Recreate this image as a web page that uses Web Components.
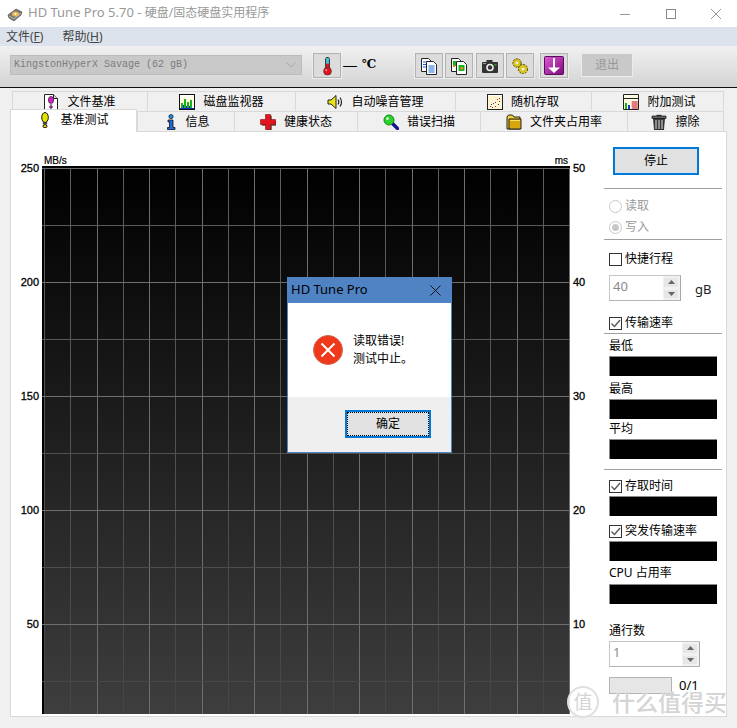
<!DOCTYPE html>
<html lang="zh">
<head>
<meta charset="utf-8">
<title>HD Tune Pro</title>
<style>
html, body { margin: 0; padding: 0; background: #f0f0f0; }
body { font: 12px/18px "Noto Sans", "Noto Sans CJK SC", sans-serif; color: #000; overflow: hidden; }
</style>
</head>
<body>
<hd-app></hd-app>
<script>
const Icons = {
    logo: `<path d="M1 9 9 3l6 3-1 3-7 6-5-3z" fill="#777" stroke="#444" stroke-width=".6"/><ellipse cx="8.5" cy="8" rx="3.6" ry="2.6" fill="#e9b24c"/><circle cx="8.5" cy="8" r="1" fill="#fff"/><path d="M2 10l5 3 7-6" fill="none" stroke="#bbb"/>`,
    fileBench: `<path d="M1.5.5h9l4 4v11h-13z" fill="#fff" stroke="#222"/><path d="M10.5.5v4h4" fill="#ddd" stroke="#222"/><ellipse cx="8" cy="6" rx="2.6" ry="3.6" fill="#d81ecb" stroke="#222" stroke-width=".7"/><rect x="6.8" y="9.6" width="2.4" height="1.4" fill="#999"/><circle cx="8" cy="13" r="1.4" fill="#d81ecb" stroke="#222" stroke-width=".6"/>`,
    monitor: `<rect x=".5" y=".5" width="15" height="15" fill="#fffbe0" stroke="#111"/><rect x="1" y="1" width="14" height="2" fill="#fff"/><path d="M2 14V9h2v5zm3 0V5h2v9zm3 0V8h2v6zm3 0V6h2v8z" fill="#18b31c"/><path d="M1 14h14v1H1z" fill="#0a30c8"/><path d="M4 14v-3h1v3zm3 0v-2h1v2zm3 0v-2h1v2z" fill="#0a30c8"/>`,
    speaker: `<path d="M1 6h3l5-4.5v13L4 10H1z" fill="#eee21a" stroke="#222"/><path d="M11 5.5c1 1.5 1 3.5 0 5M13 3.5c2 2.5 2 6.500 0 9" fill="none" stroke="#222" stroke-width="1.200"/>`,
    random: `<rect x=".5" y=".5" width="15" height="15" fill="#fdf5cf" stroke="#222"/><path d="M1 1h14v1H1z" fill="#fff"/><g fill="#d01c1c"><rect x="3" y="12" width="1" height="1"/><rect x="6" y="9" width="1" height="1"/><rect x="10" y="5" width="1" height="1"/><rect x="12" y="7" width="1" height="1"/><rect x="8" y="12" width="1" height="1"/></g><g fill="#2432c8"><rect x="4" y="10" width="1" height="1"/><rect x="8" y="8" width="1" height="1"/><rect x="12" y="4" width="1" height="1"/><rect x="11" y="10" width="1" height="1"/><rect x="5" y="13" width="1" height="1"/></g>`,
    extra: `<path d="M.5.5h15v15H.5z" fill="#fffbe0" stroke="#222"/><rect x="1" y="4" width="14" height="1" fill="#222"/><path d="M2 15V9h2v6z" fill="#18b31c"/><path d="M5 15v-4h2v4z" fill="#1438d8"/><rect x="8" y="6.500" width="7" height="8.500" fill="#fff"/><path d="M8.500 8h6m-6 2h6m-6 2h6m-6 2h6M10 7v8m2-8v8m2-8v8" stroke="#d01c1c" stroke-width=".7" fill="none"/>`,
    bulb: `<ellipse cx="5" cy="5.500" rx="3.300" ry="5" fill="#e5e000" stroke="#111"/><path d="M3.200 10.500h3.600V12H3.200z" fill="#777" stroke="#111" stroke-width=".6"/><ellipse cx="5" cy="14.200" rx="2" ry="1.600" fill="#e5e000" stroke="#111"/>`,
    info: `<circle cx="6" cy="2.600" r="2.100" fill="#1e8ae6" stroke="#111" stroke-width=".7"/><path d="M3 6h5v7.500h2v2H2.500v-2h2V8H3z" fill="#1a6bd8" stroke="#111" stroke-width=".8"/>`,
    cross: `<path d="M6 1h5v5h5v5h-5v5H6v-5H1V6h5z" fill="#555" transform="translate(.8 .8)"/><path d="M5.500.5h5v5h5v5h-5v5h-5v-5h-5v-5h5z" fill="#e2141c" stroke="#8c0a0e" stroke-width=".6"/>`,
    magnifier: `<path d="M9.500 9.500l5 5" stroke="#14148c" stroke-width="3.400" stroke-linecap="round"/><circle cx="6" cy="6" r="5" fill="#2ed02e" stroke="#118a1a"/><circle cx="4.500" cy="4.500" r="1.500" fill="#c4f7c4"/>`,
    folder: `<path d="M1 3l1.500-2h4L8 3h6v12H1z" fill="#f2d23a" stroke="#222"/><path d="M3 5h12v10H3z" fill="#d8a70e" stroke="#222"/><path d="M4 6h10v1H4z" fill="#f7e05c"/>`,
    trash: `<path d="M5.500 1.500h5" stroke="#333" stroke-width="1.400"/><path d="M1 2h14v2.500H1z" fill="#666" stroke="#111" stroke-width=".7"/><path d="M2.500 4.500h11l-1 11.500h-9z" fill="#3c3c3c" stroke="#111" stroke-width=".7"/><path d="M5 6v9M8 6v9M11 6v9" stroke="#cfcfcf" stroke-width="1.100"/>`,
    thermo: `<rect x="5.500" y="1" width="5" height="14" rx="2.500" fill="#222"/><rect x="6.500" y="2" width="3" height="7" fill="#3fc9d8"/><rect x="6.500" y="8" width="3" height="8" fill="#e2141c"/><circle cx="8" cy="16" r="4.200" fill="#e2141c" stroke="#333" stroke-width=".6"/><circle cx="6.600" cy="15" r="1" fill="#f7a0a0"/>`,
    docs: `<path d="M1.500 1.500h7l3 3v10h-10z" fill="#fff" stroke="#222"/><path d="M6.500 4.500h7l3 3v10h-10z" fill="#fff" stroke="#222"/><path d="M3 5h4M3 7.500h3M3 10h3M8.500 9h6M8.500 11h6M8.500 13h6M8.500 15h6" stroke="#1a6bd8" fill="none"/>`,
    docsImage: `<path d="M1.500 1.500h7l3 3v10h-10z" fill="#fff" stroke="#222"/><path d="M6.500 4.500h7l3 3v10h-10z" fill="#fff" stroke="#222"/><rect x="3" y="4" width="3" height="5" fill="#18b31c"/><rect x="3" y="8" width="2" height="2" fill="#e58a1a"/><rect x="8.500" y="8" width="6" height="6" fill="#18b31c"/><rect x="10.500" y="10" width="2.500" height="2.500" fill="#e58a1a"/>`,
    camera: `<path d="M5.500 3h6v2h4.500a1 1 0 0 1 1 1v9a1 1 0 0 1-1 1H2a1 1 0 0 1-1-1V6a1 1 0 0 1 1-1h3.500z" fill="#333"/><rect x="2" y="6" width="3" height="1" fill="#999"/><circle cx="9" cy="10.500" r="3.800" fill="#eee"/><circle cx="9" cy="10.500" r="2.200" fill="#333"/><rect x="13.500" y="7" width="2" height="1.500" fill="#18b31c"/>`,
    gears: `<circle cx="6" cy="6" r="4.200" fill="#d9c21a" stroke="#57500a" stroke-dasharray="2 1"/><circle cx="6" cy="6" r="1.400" fill="#eee"/><circle cx="12" cy="12" r="4.600" fill="#d9c21a" stroke="#57500a" stroke-dasharray="2 1"/><circle cx="12" cy="12" r="1.600" fill="#eee"/>`,
    save: `<defs><linearGradient id="sv" x1="0" y1="0" x2="1" y2="1"><stop offset="0" stop-color="#e05ad8"/><stop offset="1" stop-color="#7c0a78"/></linearGradient></defs><rect x=".5" y=".5" width="19" height="18" rx="1" fill="url(#sv)" stroke="#5a0a58"/><path d="M9 2h2v9.500h5L10 17 4 11.500h5z" fill="#fff"/>`,
    error: `<circle cx="15" cy="15" r="14.500" fill="#f0391a" stroke="#c9694f"/><path d="M8.500 8.500l13 13m0-13l-13 13" stroke="#fff" stroke-width="2"/>`
};

class HdIcon extends HTMLElement {
    connectedCallback() {
        if (this.shadowRoot) return;
        const w = this.getAttribute("w") || 16, h = this.getAttribute("h") || w;
        const box = this.getAttribute("box") || `0 0 ${w} ${h}`;
        this.attachShadow({mode: "open"}).innerHTML = `
        <style>:host { display: block; flex: none; width: ${w}px; height: ${h}px; } svg { display: block; }</style>
        <svg width="${w}" height="${h}" viewBox="${box}">${Icons[this.getAttribute("name")]}</svg>`;
    }
}

class HdTitlebar extends HTMLElement {
    connectedCallback() {
        this.attachShadow({mode: "open"}).innerHTML = `
        <style>
            :host { display: flex; align-items: center; height: 27px; background: #fff; color: #999; font-size: 13px; line-height: 25px; }
            hd-icon { margin: 0 5px 0 7px; }
            .name { flex: 1; padding-bottom: 2px; }
            .cn { font-size: 12px; }
            .ctl { width: 45.5px; height: 27px; display: flex; align-items: center; justify-content: center; }
            .ctl:last-child { margin-right: -2px; }
            .ctl svg { display: block; }
        </style>
        <hd-icon name="logo" w="16"></hd-icon>
        <span class="name">HD Tune Pro 5.70 - <span class="cn">硬盘/固态硬盘实用程序</span></span>
        <span class="ctl"><svg width="10" height="10"><path d="M0 5.500h10" stroke="#999"/></svg></span>
        <span class="ctl"><svg width="10" height="10"><rect x=".5" y=".5" width="9" height="9" fill="none" stroke="#888"/></svg></span>
        <span class="ctl"><svg width="10" height="10"><path d="M0 0l10 10M10 0L0 10" stroke="#999"/></svg></span>`;
    }
}

class HdMenubar extends HTMLElement {
    connectedCallback() {
        this.attachShadow({mode: "open"}).innerHTML = `
        <style>
            :host { display: flex; gap: 19px; height: 19px; padding-left: 6px; background: #dce3ec; color: #444; font-size: 12px; line-height: 19px; }
            u { text-underline-offset: 1px; }
        </style>
        <span>文件(<u>F</u>)</span>
        <span>帮助(<u>H</u>)</span>`;
    }
}

class HdToolButton extends HTMLElement {
    connectedCallback() {
        this.attachShadow({mode: "open"}).innerHTML = `
        <style>
            :host { display: flex; flex: none; align-items: center; justify-content: center; box-sizing: border-box; width: 28px; height: 25px; background: #dcdcdc; border: 1px solid #b2b2b2; box-shadow: 0 0 0 1px #eeeeee; }
        </style>
        <slot></slot>`;
    }
}

class HdToolbar extends HTMLElement {
    connectedCallback() {
        this.attachShadow({mode: "open"}).innerHTML = `
        <style>
            :host { display: flex; align-items: flex-start; box-sizing: border-box; height: 42px; padding: 7px 0 0 10px; background: linear-gradient(#f1f1f1, #d3d3d3); border-bottom: 1px solid #111; }
            .drive { display: flex; align-items: center; justify-content: space-between; box-sizing: border-box; width: 292px; height: 20px; margin-top: 2px; padding: 0 5px 0 3px; background: #c8c8c8; border: 1px solid #bcbcbc; font: 10px/18px "Liberation Mono", monospace; color: #7c7c7c; }
            .temp { margin-left: 11px; }
            .dash { width: 16px; margin-left: 1px; font-size: 15px; font-weight: 300; line-height: 22px; text-align: center; }
            .unit { width: 16px; margin-left: 4px; font: bold 12px/22px "DejaVu Serif", serif; }
            .b1 { margin-left: 37px; } .b2 { margin-left: 2px; } .b3 { margin-left: 3px; } .b4 { margin-left: 2px; } .b5 { margin-left: 6px; }
            .exit { flex: none; box-sizing: border-box; width: 52px; height: 24px; margin-left: 13px; background: #c9c9c9; border: 1px solid #ececec; color: #999; font-size: 12px; line-height: 22px; text-align: center; }
        </style>
        <div class="drive"><span>KingstonHyperX Savage (62 gB)</span>
            <svg width="10" height="6"><path d="M.5.5l4.500 4.500L9.500.5" fill="none" stroke="#a8a8a8"/></svg></div>
        <hd-tool-button class="temp"><hd-icon name="thermo" w="15" h="20" box="0 0 16 21"></hd-icon></hd-tool-button>
        <span class="dash">—</span>
        <span class="unit">℃</span>
        <hd-tool-button class="b1"><hd-icon name="docs" w="18"></hd-icon></hd-tool-button>
        <hd-tool-button class="b2"><hd-icon name="docsImage" w="18"></hd-icon></hd-tool-button>
        <hd-tool-button class="b3"><hd-icon name="camera" w="18"></hd-icon></hd-tool-button>
        <hd-tool-button class="b4"><hd-icon name="gears" w="18"></hd-icon></hd-tool-button>
        <hd-tool-button class="b5"><hd-icon name="save" w="20" h="19"></hd-icon></hd-tool-button>
        <div class="exit">退出</div>`;
    }
}

class HdTab extends HTMLElement {
    connectedCallback() {
        const icon = this.getAttribute("icon");
        const iw = this.getAttribute("iw") || 16, ih = this.getAttribute("ih") || 16;
        this.attachShadow({mode: "open"}).innerHTML = `
        <style>
            :host { display: flex; flex: none; align-items: center; justify-content: center; gap: 8px; box-sizing: border-box; height: 20px; background: #f0f0f0; border: solid #d9d9d9; border-width: 1px 0 0 1px; font-size: 12px; line-height: 18px; color: #000; }
            :host([last]) { border-right-width: 1px; }
            :host([selected]) { position: relative; z-index: 1; height: 23px; margin-bottom: -1px; padding: 0 0 3px 2px; gap: 10px; background: #fff; border-width: 1px 1px 0 1px; }
        </style>
        <hd-icon name="${icon}" w="${iw}" h="${ih}" box="0 0 ${iw} ${ih}"></hd-icon>
        <slot></slot>`;
    }
}

class HdTabs extends HTMLElement {
    connectedCallback() {
        this.attachShadow({mode: "open"}).innerHTML = `
        <style>
            :host { display: block; padding-top: 3px; }
            .row { display: flex; align-items: flex-end; }
            .back { height: 18px; padding-left: 12px; align-items: flex-start; }
            .front { height: 22px; padding-left: 10px; }
        </style>
        <div class="row back">
            <hd-tab icon="fileBench" style="width:135px;padding-right:1px">文件基准</hd-tab>
            <hd-tab icon="monitor" style="width:148px">磁盘监视器</hd-tab>
            <hd-tab icon="speaker" style="width:160px">自动噪音管理</hd-tab>
            <hd-tab icon="random" style="width:136px;padding-right:1px">随机存取</hd-tab>
            <hd-tab icon="extra" style="width:133px;padding-left:4px" last>附加测试</hd-tab>
        </div>
        <div class="row front">
            <hd-tab icon="bulb" iw="10" style="width:127px" selected>基准测试</hd-tab>
            <hd-tab icon="info" iw="12" style="width:97px;padding-left:3px">信息</hd-tab>
            <hd-tab icon="cross" style="width:123px">健康状态</hd-tab>
            <hd-tab icon="magnifier" style="width:123px">错误扫描</hd-tab>
            <hd-tab icon="folder" style="width:147px">文件夹占用率</hd-tab>
            <hd-tab icon="trash" style="width:97px" last>擦除</hd-tab>
        </div>`;
    }
}

class HdChart extends HTMLElement {
    connectedCallback() {
        // 网格线: 竖线 20 格, 横线每 57px 一条, 偶数条是主线
        let lines = "";
        for (let i = 0; i <= 20; i++) {
            const x = Math.round(2 + 26.25 * i) + .5;
            const major = i % 2 == 0 && i > 0;
            lines += `<path d="M${x} 2V548" stroke="${major ? "#6e6e6e" : "url(#minor)"}"/>`;
        }
        for (let i = 0; i < 10; i++) {
            const y = 2 + 57 * i + .5;
            lines += `<path d="M0 ${y}H527" stroke="${i % 2 == 0 ? "#6e6e6e" : "url(#minor)"}"/>`;
        }
        const left = [250, 200, 150, 100, 50].map(n => `<span>${n}</span>`).join("");
        const right = [50, 40, 30, 20, 10].map(n => `<span>${n}</span>`).join("");
        this.attachShadow({mode: "open"}).innerHTML = `
        <style>
            :host { display: flex; flex: none; font: 11px/14px "Liberation Sans", sans-serif; color: #000; }
            .axis { display: flex; flex-direction: column; flex: none; padding-top: 29px; -webkit-text-stroke: .3px #000; }
            .axis span { flex: none; height: 114px; }
            .axis span:last-child { height: 14px; }
            .left { width: 28px; padding-right: 3px; text-align: right; }
            .right { width: 31px; padding-left: 3px; }
            .plot { padding-top: 23px; }
            .unit { display: flex; justify-content: space-between; height: 11px; padding: 0 2px; font-size: 10px; line-height: 11px; -webkit-text-stroke: .2px #000; }
            svg { display: block; }
        </style>
        <div class="axis left">${left}</div>
        <div class="plot">
            <div class="unit"><span>MB/s</span><span>ms</span></div>
            <svg width="528" height="548">
                <defs>
                    <linearGradient id="bg" x1="0" y1="0" x2="0" y2="1"><stop offset="0" stop-color="#000"/><stop offset="1" stop-color="#3e3e3e"/></linearGradient>
                    <linearGradient id="minor" gradientUnits="userSpaceOnUse" x1="0" y1="0" x2="0" y2="548"><stop offset="0" stop-color="#5e5e5e"/><stop offset="1" stop-color="#464646"/></linearGradient>
                </defs>
                <rect x="2" y="2" width="525" height="546" fill="url(#bg)"/>
                <rect width="528" height="2" fill="#000"/>
                <rect width="2" height="548" fill="#000"/>
                ${lines}
            </svg>
        </div>
        <div class="axis right">${right}</div>`;
    }
}

class HdCheck extends HTMLElement {
    connectedCallback() {
        const on = this.hasAttribute("checked");
        this.attachShadow({mode: "open"}).innerHTML = `
        <style>
            :host { display: flex; align-items: center; gap: 3px; box-sizing: border-box; height: 20px; padding: 2px 0 0 5px; font-size: 12px; line-height: 18px; }
            .box { box-sizing: border-box; width: 13px; height: 13px; border: 1px solid #333; background: #fff; }
            svg { display: block; }
        </style>
        <div class="box">${on ? `<svg width="11" height="11"><path d="M1.500 5.500l3 3 5.500-6.500" fill="none" stroke="#555" stroke-width="1.300"/></svg>` : ""}</div>
        <slot></slot>`;
    }
}

class HdRadio extends HTMLElement {
    connectedCallback() {
        const on = this.hasAttribute("checked");
        this.attachShadow({mode: "open"}).innerHTML = `
        <style>
            :host { display: flex; align-items: center; gap: 3px; height: 20px; padding-left: 5px; color: #9a9a9a; font-size: 12px; line-height: 18px; }
            svg { display: block; }
        </style>
        <svg width="13" height="13"><circle cx="6.500" cy="6.500" r="6" fill="#fff" stroke="#c8c8c8"/>${on ? `<circle cx="6.500" cy="6.500" r="3.500" fill="#c8c8c8"/>` : ""}</svg>
        <slot></slot>`;
    }
}

class HdSpin extends HTMLElement {
    connectedCallback() {
        this.attachShadow({mode: "open"}).innerHTML = `
        <style>
            :host { display: flex; box-sizing: border-box; height: 26px; background: #fff; border: 1px solid #c6c6c6; border-right-color: #a8a8a8; border-bottom-color: #b4b4b4; color: #8a8a8a; font-size: 13px; line-height: 20px; }
            .value { flex: 1; padding-left: 3px; }
            .btns { display: flex; flex-direction: column; gap: 1px; width: 17px; padding: 1px 1px 1px 0; background: #f0f0f0; box-sizing: border-box; }
            .btn { flex: 1; display: flex; align-items: center; justify-content: center; background: #e6e6e6; border: 1px solid #f2f2f2; box-sizing: border-box; }
            svg { display: block; }
        </style>
        <div class="value"><slot></slot></div>
        <div class="btns">
            <div class="btn"><svg width="7" height="4"><path d="M3.500 0L7 4H0z" fill="#666"/></svg></div>
            <div class="btn"><svg width="7" height="4"><path d="M0 0h7L3.500 4z" fill="#666"/></svg></div>
        </div>`;
    }
}

class HdReadout extends HTMLElement {
    connectedCallback() {
        this.attachShadow({mode: "open"}).innerHTML = `
        <style>
            :host { display: block; box-sizing: border-box; width: 108px; height: 20px; margin-left: 5px; background: #000; border: solid #888; border-width: 1px 0 0 1px; }
        </style>`;
    }
}

class HdSidebar extends HTMLElement {
    connectedCallback() {
        this.attachShadow({mode: "open"}).innerHTML = `
        <style>
            :host { display: block; flex: none; width: 118px; padding-top: 15px; font-size: 12px; line-height: 18px; }
            .stop { box-sizing: border-box; width: 86px; height: 28px; margin-left: 9px; background: #e1e1e1; border: 2px solid #0078d7; line-height: 24px; text-align: center; }
            hr { height: 1px; margin: 0; border: 0; background: #a0a0a0; }
            .label { height: 18px; padding-left: 5px; }
            .unit { font-size: 13px; margin: 5px 0 0 14px; color: #222; }
            .row { display: flex; margin-left: 5px; }
            .bar { box-sizing: border-box; width: 63px; height: 17px; margin-left: 5px; background: #e6e6e6; border: 1px solid #b4b4b4; }
            .pass { height: 14px; margin: 1px 0 0 7px; font-size: 13px; line-height: 14px; }
        </style>
        <div class="stop">停止</div>
        <hr style="margin-top:13px">
        <hd-radio style="margin-top:7px">读取</hd-radio>
        <hd-radio style="margin-top:1px" checked>写入</hd-radio>
        <hr style="margin-top:2px">
        <hd-check style="margin-top:8px">快捷行程</hd-check>
        <div class="row" style="margin-top:7px"><hd-spin style="width:72px">40</hd-spin><span class="unit">gB</span></div>
        <hd-check style="margin-top:11px" checked>传输速率</hd-check>
        <hr style="margin-top:1px">
        <div class="label" style="margin-top:3px">最低</div>
        <hd-readout style="margin-top:1px"></hd-readout>
        <div class="label" style="margin-top:4px">最高</div>
        <hd-readout style="margin-top:1px"></hd-readout>
        <div class="label" style="margin-top:1px">平均</div>
        <hd-readout style="margin-top:1px"></hd-readout>
        <hr style="margin-top:10px">
        <hd-check style="margin-top:5px" checked>存取时间</hd-check>
        <hd-readout style="margin-top:1px"></hd-readout>
        <hd-check style="margin-top:4px" checked>突发传输速率</hd-check>
        <hd-readout style="margin-top:1px"></hd-readout>
        <div class="label" style="margin-top:3px">CPU 占用率</div>
        <hd-readout style="margin-top:2px"></hd-readout>
        <div class="label" style="margin-top:18px">通行数</div>
        <div class="row" style="margin-top:1px"><hd-spin style="width:91px">1</hd-spin></div>
        <div style="display:flex;margin-top:10px"><div class="bar"></div><span class="pass">0/1</span></div>`;
    }
}

class HdDialog extends HTMLElement {
    connectedCallback() {
        this.attachShadow({mode: "open"}).innerHTML = `
        <style>
            :host { position: absolute; left: 287px; top: 277px; z-index: 5; display: flex; flex-direction: column; box-sizing: border-box; width: 165px; height: 176px; background: #fff; border: 1px solid #4f83c4; font-size: 12px; line-height: 18px; }
            .title { display: flex; align-items: center; justify-content: space-between; height: 25px; padding: 0 10px 0 3px; background: #4f83c4; font-size: 13px; line-height: 23px; color: #000; }
            .title span { padding-bottom: 2px; }
            .body { display: flex; align-items: center; gap: 10px; flex: 1; padding: 0 0 0 25px; }
            .foot { display: flex; justify-content: flex-end; height: 55px; padding: 13px 20px 0 0; box-sizing: border-box; background: #efefef; }
            .ok { box-sizing: border-box; width: 86px; height: 28px; background: #e1e1e1; border: 2px solid #0078d7; outline: 1px dotted #000; outline-offset: -3px; line-height: 24px; text-align: center; }
            svg { display: block; }
        </style>
        <div class="title"><span>HD Tune Pro</span><svg width="11" height="11"><path d="M.5.5l10 10m0-10l-10 10" stroke="#111"/></svg></div>
        <div class="body"><hd-icon name="error" w="30"></hd-icon><div>读取错误!<br>测试中止。</div></div>
        <div class="foot"><div class="ok">确定</div></div>`;
    }
}

class HdWatermark extends HTMLElement {
    connectedCallback() {
        this.attachShadow({mode: "open"}).innerHTML = `
        <style>
            :host { position: absolute; left: 567px; top: 686px; z-index: 6; display: flex; align-items: center; gap: 13px; color: #d4d4d4; }
            .logo { display: flex; align-items: center; justify-content: center; box-sizing: border-box; width: 32px; height: 32px; border-radius: 50%; background: rgba(255,255,255,.85); border: 2px solid #dedede; font-size: 19px; line-height: 28px; }
            .name { font-size: 23px; line-height: 20px; font-weight: 500; text-shadow: 0 0 2px #fff; }
        </style>
        <div class="logo">值</div>
        <div class="name">什么值得买</div>`;
    }
}

class HdApp extends HTMLElement {
    connectedCallback() {
        this.attachShadow({mode: "open"}).innerHTML = `
        <style>
            :host { position: relative; display: block; width: 737px; height: 728px; overflow: hidden; background: #f0f0f0; }
            .panel { display: flex; box-sizing: border-box; width: 717px; height: 586px; margin-left: 10px; background: #fff; border: 1px solid #d9d9d9; }
        </style>
        <hd-titlebar></hd-titlebar>
        <hd-menubar></hd-menubar>
        <hd-toolbar></hd-toolbar>
        <hd-tabs></hd-tabs>
        <div class="panel">
            <hd-chart></hd-chart>
            <hd-sidebar></hd-sidebar>
        </div>
        <hd-dialog></hd-dialog>
        <hd-watermark></hd-watermark>`;
    }
}

customElements.define("hd-icon", HdIcon);
customElements.define("hd-titlebar", HdTitlebar);
customElements.define("hd-menubar", HdMenubar);
customElements.define("hd-tool-button", HdToolButton);
customElements.define("hd-toolbar", HdToolbar);
customElements.define("hd-tab", HdTab);
customElements.define("hd-tabs", HdTabs);
customElements.define("hd-chart", HdChart);
customElements.define("hd-check", HdCheck);
customElements.define("hd-radio", HdRadio);
customElements.define("hd-spin", HdSpin);
customElements.define("hd-readout", HdReadout);
customElements.define("hd-sidebar", HdSidebar);
customElements.define("hd-dialog", HdDialog);
customElements.define("hd-watermark", HdWatermark);
customElements.define("hd-app", HdApp);
</script>
</body>
</html>
